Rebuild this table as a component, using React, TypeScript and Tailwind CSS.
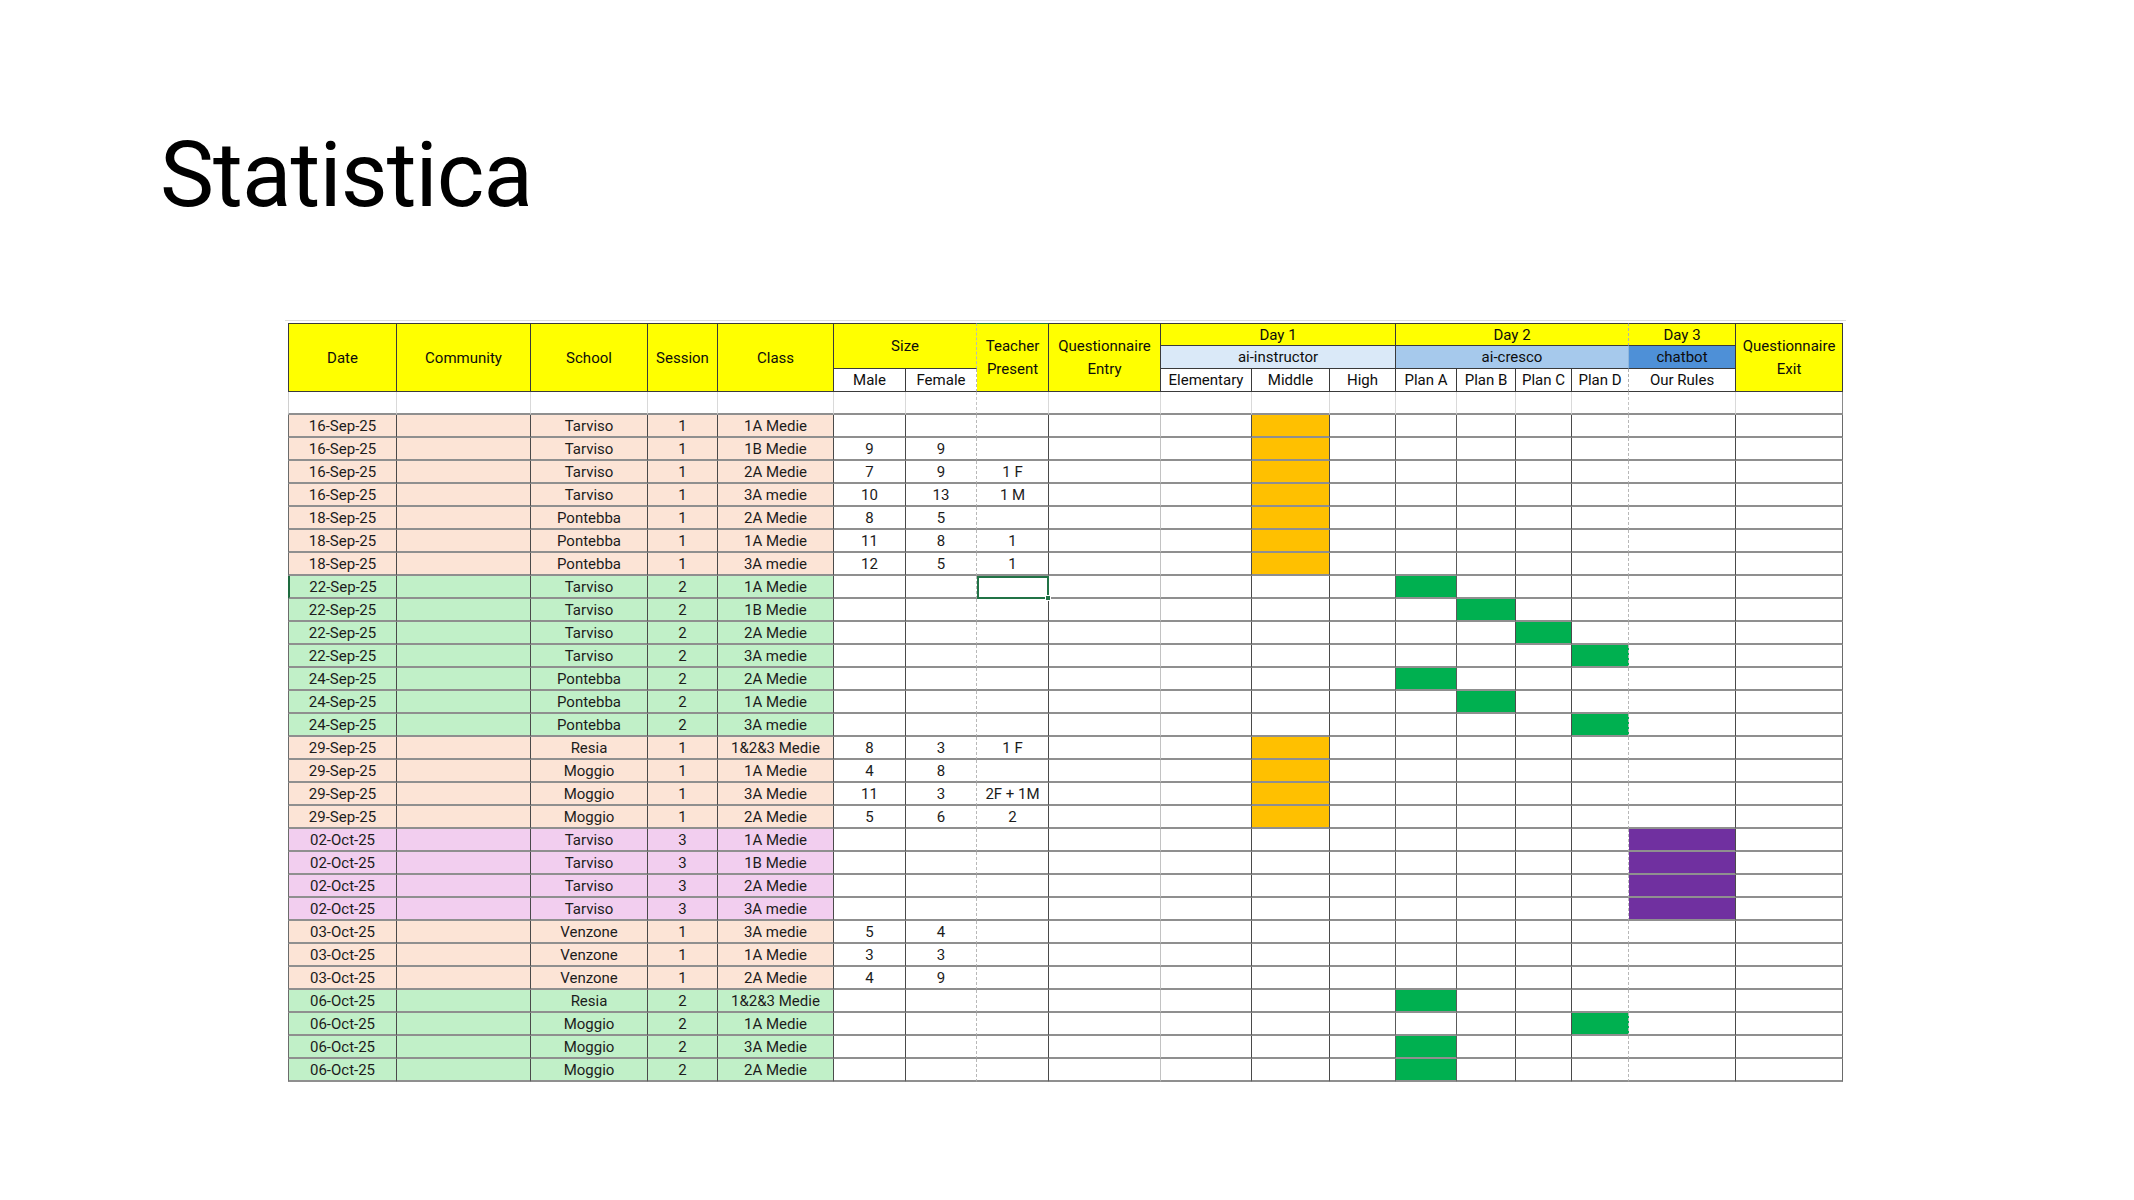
import React from 'react';

type Tone = 'p' | 'g' | 'v';
type Row = {
  d: string;
  s: string;
  n: string;
  c: string;
  m?: string;
  f?: string;
  t?: string;
  tone: Tone;
  mark?: number;
  sel?: boolean;
};

// 10 = Day 1 Middle, 12..15 = Plan A..D, 16 = Our Rules
const rows: Row[] = [
  { d: '16-Sep-25', s: 'Tarviso', n: '1', c: '1A Medie', tone: 'p', mark: 10 },
  { d: '16-Sep-25', s: 'Tarviso', n: '1', c: '1B Medie', m: '9', f: '9', tone: 'p', mark: 10 },
  { d: '16-Sep-25', s: 'Tarviso', n: '1', c: '2A Medie', m: '7', f: '9', t: '1 F', tone: 'p', mark: 10 },
  { d: '16-Sep-25', s: 'Tarviso', n: '1', c: '3A medie', m: '10', f: '13', t: '1 M', tone: 'p', mark: 10 },
  { d: '18-Sep-25', s: 'Pontebba', n: '1', c: '2A Medie', m: '8', f: '5', tone: 'p', mark: 10 },
  { d: '18-Sep-25', s: 'Pontebba', n: '1', c: '1A Medie', m: '11', f: '8', t: '1', tone: 'p', mark: 10 },
  { d: '18-Sep-25', s: 'Pontebba', n: '1', c: '3A medie', m: '12', f: '5', t: '1', tone: 'p', mark: 10 },
  { d: '22-Sep-25', s: 'Tarviso', n: '2', c: '1A Medie', tone: 'g', mark: 12, sel: true },
  { d: '22-Sep-25', s: 'Tarviso', n: '2', c: '1B Medie', tone: 'g', mark: 13 },
  { d: '22-Sep-25', s: 'Tarviso', n: '2', c: '2A Medie', tone: 'g', mark: 14 },
  { d: '22-Sep-25', s: 'Tarviso', n: '2', c: '3A medie', tone: 'g', mark: 15 },
  { d: '24-Sep-25', s: 'Pontebba', n: '2', c: '2A Medie', tone: 'g', mark: 12 },
  { d: '24-Sep-25', s: 'Pontebba', n: '2', c: '1A Medie', tone: 'g', mark: 13 },
  { d: '24-Sep-25', s: 'Pontebba', n: '2', c: '3A medie', tone: 'g', mark: 15 },
  { d: '29-Sep-25', s: 'Resia', n: '1', c: '1&2&3 Medie', m: '8', f: '3', t: '1 F', tone: 'p', mark: 10 },
  { d: '29-Sep-25', s: 'Moggio', n: '1', c: '1A Medie', m: '4', f: '8', tone: 'p', mark: 10 },
  { d: '29-Sep-25', s: 'Moggio', n: '1', c: '3A Medie', m: '11', f: '3', t: '2F + 1M', tone: 'p', mark: 10 },
  { d: '29-Sep-25', s: 'Moggio', n: '1', c: '2A Medie', m: '5', f: '6', t: '2', tone: 'p', mark: 10 },
  { d: '02-Oct-25', s: 'Tarviso', n: '3', c: '1A Medie', tone: 'v', mark: 16 },
  { d: '02-Oct-25', s: 'Tarviso', n: '3', c: '1B Medie', tone: 'v', mark: 16 },
  { d: '02-Oct-25', s: 'Tarviso', n: '3', c: '2A Medie', tone: 'v', mark: 16 },
  { d: '02-Oct-25', s: 'Tarviso', n: '3', c: '3A medie', tone: 'v', mark: 16 },
  { d: '03-Oct-25', s: 'Venzone', n: '1', c: '3A medie', m: '5', f: '4', tone: 'p' },
  { d: '03-Oct-25', s: 'Venzone', n: '1', c: '1A Medie', m: '3', f: '3', tone: 'p' },
  { d: '03-Oct-25', s: 'Venzone', n: '1', c: '2A Medie', m: '4', f: '9', tone: 'p' },
  { d: '06-Oct-25', s: 'Resia', n: '2', c: '1&2&3 Medie', tone: 'g', mark: 12 },
  { d: '06-Oct-25', s: 'Moggio', n: '2', c: '1A Medie', tone: 'g', mark: 15 },
  { d: '06-Oct-25', s: 'Moggio', n: '2', c: '3A Medie', tone: 'g', mark: 12 },
  { d: '06-Oct-25', s: 'Moggio', n: '2', c: '2A Medie', tone: 'g', mark: 12 },
];

const TONE: Record<Tone, string> = {
  p: 'bg-[#fce4d6]',
  g: 'bg-[#c1f0c8]',
  v: 'bg-[#f2ceef]',
};

const colW = [
  'w-[109px]', 'w-[134px]', 'w-[117px]', 'w-[70px]', 'w-[116px]', 'w-[72px]',
  'w-[71px]', 'w-[72px]', 'w-[112px]', 'w-[91px]', 'w-[78px]', 'w-[66px]',
  'w-[61px]', 'w-[59px]', 'w-[56px]', 'w-[57px]', 'w-[107px]', 'w-[107px]',
];

// right-hand border of each column in the body
const bodyRight = [
  'border-r-[#4a4a4a]', 'border-r-[#4a4a4a]', 'border-r-[#4a4a4a]', 'border-r-[#4a4a4a]',
  'border-r-[#4a4a4a]', 'border-r-[#4a4a4a]', 'border-r-[#b8b8b8] [border-right-style:dashed]',
  'border-r-[#4a4a4a]', 'border-r-[#c2c2c2]', 'border-r-[#4a4a4a]', 'border-r-[#4a4a4a]',
  'border-r-[#5a5a5a]', 'border-r-[#5a5a5a]', 'border-r-[#4a4a4a]', 'border-r-[#4a4a4a]',
  'border-r-[#b8b8b8] [border-right-style:dashed]', 'border-r-[#4a4a4a]', 'border-r-[#6a6a6a]',
];

const blankRight = [
  'border-r-[#d9d9d9]', 'border-r-[#d9d9d9]', 'border-r-[#d9d9d9]', 'border-r-[#d9d9d9]',
  'border-r-[#d9d9d9]', 'border-r-[#d9d9d9]', 'border-r-[#c4c4c4] [border-right-style:dashed]',
  'border-r-[#d9d9d9]', 'border-r-[#d9d9d9]', 'border-r-[#d9d9d9]', 'border-r-[#d9d9d9]',
  'border-r-[#d9d9d9]', 'border-r-[#d9d9d9]', 'border-r-[#d9d9d9]', 'border-r-[#d9d9d9]',
  'border-r-[#c4c4c4] [border-right-style:dashed]', 'border-r-[#d9d9d9]', 'border-r-[#8a8a8a]',
];

const fillFor = (mark?: number) => {
  if (mark === 10) return 'bg-[#ffc000]';
  if (mark === 16) return 'bg-[#7030a0]';
  return 'bg-[#00b050]';
};

const cellBase = 'h-[23px] p-0 text-center align-middle border-r border-b-2 border-b-[#8f8f8f] whitespace-nowrap';
const hd = 'p-0 text-center align-middle font-normal text-[#0d0d0d] border-r border-b border-[#3a3a3a] whitespace-nowrap';
const yellow = 'bg-[#ffff00]';

function DataRow({ row }: { row: Row }) {
  const left = [row.d, '', row.s, row.n, row.c];
  const right = [row.m, row.f, row.t];
  return (
    <tr>
      {left.map((v, i) => (
        <td
          key={i}
          className={`${cellBase} ${bodyRight[i]} ${TONE[row.tone]} ${
            i === 0 ? (row.sel ? 'border-l-2 border-l-[#1e6b3f]' : 'border-l border-l-[#6b6b6b]') : ''
          }`}
        >
          {v}
        </td>
      ))}
      {right.map((v, j) => {
        const i = j + 5;
        const selected = row.sel && i === 7;
        return (
          <td
            key={i}
            className={`${cellBase} ${bodyRight[i]} bg-white ${
              selected ? 'relative outline-2 outline-[#217346] -outline-offset-2' : ''
            }`}
          >
            {v}
            {selected && (
              <span className="absolute -right-[3px] -bottom-[4px] w-[6px] h-[6px] bg-[#217346] border border-white" />
            )}
          </td>
        );
      })}
      {Array.from({ length: 10 }, (_, j) => {
        const i = j + 8;
        const on = row.mark === i;
        return (
          <td key={i} className={`${cellBase} ${bodyRight[i]} ${on ? fillFor(i) : 'bg-white'}`} />
        );
      })}
    </tr>
  );
}

export default function App() {
  return (
    <div className="w-[2134px] h-[1200px] bg-white overflow-hidden">
      <h1 className="ml-[160px] pt-[130px] text-[91px] leading-none font-normal tracking-[-0.01em] text-black [font-family:Roboto,sans-serif]">
        Statistica
      </h1>

      <div className="ml-[285px] mt-[99px] w-[1561px] border-t border-[#dcdcdc] pt-[2px] pl-[3px]">
        <table className="table-fixed border-separate border-spacing-0 w-[1555px] text-[15px] leading-[20px] text-[#1c1c1c] [font-family:Roboto,'Liberation_Sans',Arial,sans-serif]">
          <colgroup>
            {colW.map((w, i) => (
              <col key={i} className={w} />
            ))}
          </colgroup>
          <thead>
            <tr className="h-[23px]">
              <th rowSpan={3} className={`${hd} ${yellow} border-t border-l`}>Date</th>
              <th rowSpan={3} className={`${hd} ${yellow} border-t`}>Community</th>
              <th rowSpan={3} className={`${hd} ${yellow} border-t`}>School</th>
              <th rowSpan={3} className={`${hd} ${yellow} border-t`}>Session</th>
              <th rowSpan={3} className={`${hd} ${yellow} border-t`}>Class</th>
              <th
                colSpan={2}
                rowSpan={2}
                className={`${hd} ${yellow} border-t border-r-[#b8b8b8] [border-right-style:dashed]`}
              >
                Size
              </th>
              <th rowSpan={3} className={`${hd} ${yellow} border-t border-t-[#217346] leading-[23px]`}>
                Teacher
                <br />
                Present
              </th>
              <th rowSpan={3} className={`${hd} ${yellow} border-t leading-[23px]`}>
                Questionnaire
                <br />
                Entry
              </th>
              <th colSpan={3} className={`${hd} ${yellow} border-t`}>Day 1</th>
              <th
                colSpan={4}
                className={`${hd} ${yellow} border-t border-r-[#b0b0b0] [border-right-style:dashed]`}
              >
                Day 2
              </th>
              <th className={`${hd} ${yellow} border-t`}>Day 3</th>
              <th rowSpan={3} className={`${hd} ${yellow} border-t leading-[23px]`}>
                Questionnaire
                <br />
                Exit
              </th>
            </tr>
            <tr className="h-[23px]">
              <th colSpan={3} className={`${hd} bg-[#dae9f8]`}>ai-instructor</th>
              <th colSpan={4} className={`${hd} bg-[#a6c9ec] border-r-[#8fb6dc]`}>ai-cresco</th>
              <th className={`${hd} bg-[#4e90d7]`}>chatbot</th>
            </tr>
            <tr className="h-[23px]">
              <th className={`${hd} bg-white`}>Male</th>
              <th className={`${hd} bg-white border-r-[#b8b8b8] [border-right-style:dashed]`}>Female</th>
              <th className={`${hd} bg-white`}>Elementary</th>
              <th className={`${hd} bg-white`}>Middle</th>
              <th className={`${hd} bg-white`}>High</th>
              <th className={`${hd} bg-white`}>Plan A</th>
              <th className={`${hd} bg-white`}>Plan B</th>
              <th className={`${hd} bg-white`}>Plan C</th>
              <th className={`${hd} bg-white border-r-[#b0b0b0] [border-right-style:dashed]`}>Plan D</th>
              <th className={`${hd} bg-white`}>Our Rules</th>
            </tr>
          </thead>
          <tbody>
            <tr>
              {blankRight.map((b, i) => (
                <td
                  key={i}
                  className={`${cellBase} ${b} bg-white ${i === 0 ? 'border-l border-l-[#d0d0d0]' : ''}`}
                />
              ))}
            </tr>
            {rows.map((r, i) => (
              <DataRow key={i} row={r} />
            ))}
          </tbody>
        </table>
      </div>
    </div>
  );
}
